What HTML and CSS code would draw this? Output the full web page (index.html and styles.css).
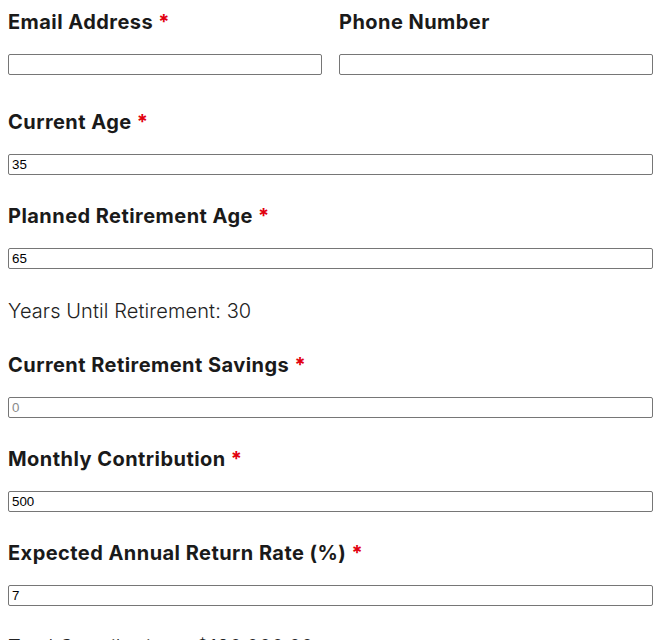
FILE: index.html
```html
<!DOCTYPE html>
<html lang="en">
<head>
<meta charset="utf-8">
<title>Retirement Calculator</title>
<link rel="stylesheet" href="styles.css">
</head>
<body>
<form class="form">
  <div class="row">
    <div class="field">
      <label class="label">Email Address <span class="req">*</span></label>
      <input class="input" type="email">
    </div>
    <div class="field">
      <label class="label">Phone Number</label>
      <input class="input" type="tel">
    </div>
  </div>
  <div class="group">
    <label class="label">Current Age <span class="req">*</span></label>
    <input class="input" type="text" value="35">
  </div>
  <div class="group">
    <label class="label">Planned Retirement Age <span class="req">*</span></label>
    <input class="input" type="text" value="65">
  </div>
  <p class="result result-years">Years Until Retirement: 30</p>
  <div class="group">
    <label class="label">Current Retirement Savings <span class="req">*</span></label>
    <input class="input" type="text" placeholder="0">
  </div>
  <div class="group">
    <label class="label">Monthly Contribution <span class="req">*</span></label>
    <input class="input" type="text" value="500">
  </div>
  <div class="group">
    <label class="label">Expected Annual Return Rate (%) <span class="req">*</span></label>
    <input class="input" type="text" value="7">
  </div>
  <p class="result result-total">Total Contributions: $180,000.00</p>
</form>
</body>
</html>
```
FILE: styles.css
```css
html, body {
  margin: 0;
  padding: 0;
  background: #ffffff;
}
body {
  padding: 10px 14px 0 8px;
  font-family: Inter, "Noto Sans", sans-serif;
  color: #1a1a1a;
}
.form {
  width: 645px;
  display: flex;
  flex-direction: column;
}
.row {
  display: grid;
  grid-template-columns: 1fr 1fr;
  column-gap: 17px;
  margin-bottom: 35px;
}
.field, .group {
  display: flex;
  flex-direction: column;
}
.group {
  margin-bottom: 29px;
}
.label {
  display: block;
  font-size: 20px;
  line-height: 24px;
  font-weight: 700;
  letter-spacing: 0.45px;
  margin-bottom: 20px;
  color: #1a1a1a;
}
.req {
  color: #e2000f;
}
.input {
  box-sizing: border-box;
  height: 21px;
  width: 100%;
  margin: 0;
  padding: 1px 3px;
  border: 1px solid #767676;
  border-radius: 2px;
  background: #fff;
  font-family: "Liberation Sans", Arial, sans-serif;
  font-size: 13.33px;
  color: #000;
}
.input::placeholder {
  color: #8a8a8a;
}
.result {
  margin: 0;
  font-size: 20px;
  line-height: 24px;
  font-weight: 300;
  letter-spacing: 0.1px;
  color: #222;
}
.result-years {
  margin-top: 1px;
  margin-bottom: 30px;
}
.result-total {
  margin-top: 0;
}
```
